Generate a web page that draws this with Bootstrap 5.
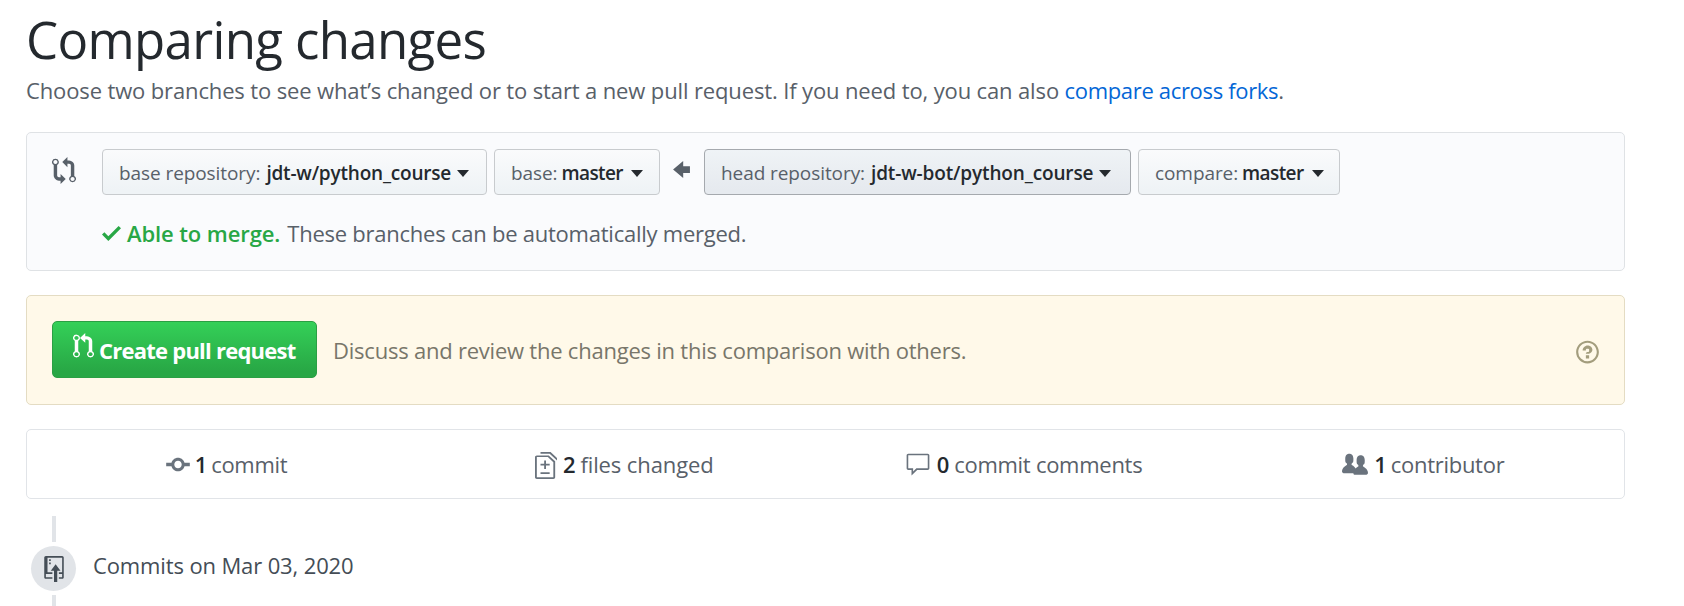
<!DOCTYPE html>
<html lang="en">
<head>
<meta charset="utf-8">
<meta name="viewport" content="width=device-width, initial-scale=1">
<title>Comparing changes</title>
<link href="https://cdn.jsdelivr.net/npm/bootstrap@5.3.0/dist/css/bootstrap.min.css" rel="stylesheet">
<style>
  body { font: 400 22px/34px "Open Sans", "Noto Sans", sans-serif; color: #586069; background: #fff; overflow: hidden; white-space: nowrap; letter-spacing: -.27px; }
  svg { fill: currentColor; display: block; flex: none; }
  b { font-weight: 600; }
  .page { width: 1599px; margin-left: 26px; padding-top: 4px; }
  .page-title { font-size: 51px; line-height: 70px; font-weight: 400; color: #24292e; letter-spacing: -.66px; }
  .intro { margin-top: -1px; letter-spacing: -.133px; }
  .intro a { color: #0366d6; letter-spacing: -.33px; }
  .compare-box { margin-top: 25px; height: 139px; padding: 16px 0 0 25px; background: #fafbfd; border: 1px solid #dfe2e5; border-radius: 5px; }
  .compare-box > svg { color: #586069; margin: 8px 26px 0 0; }
  .btn-branch { height: 46px; padding: 1px 17px 0 16px; font-size: 19px; line-height: 42px; color: #24292e; border: 1px solid #c8cbce; border-radius: 4px; background: linear-gradient(#fafbfc, #eff3f6 90%); display: flex; align-items: center; letter-spacing: -.08px; }
  .btn-branch span { color: #586069; margin-right: 6px; }
  .btn-branch b { letter-spacing: -.2px; }
  .btn-branch::after { content: ""; border: 6.5px solid transparent; border-top: 7px solid #24292e; border-bottom: 0; margin: 1px 0 0 6px; }
  .btn-branch.active { color: #24292e; border-color: #a5a9ae; background: linear-gradient(#eff3f6, #e6eaef 90%); }
  .btn-branch.active b { letter-spacing: -.14px; }
  .master span { margin-right: 4px; }
  .master b { letter-spacing: -.6px; margin-right: 2px; }
  .merge-status { margin-top: 21px; }
  .merge-status b { color: #28a745; margin: 0 7px 0 6px; letter-spacing: -.1px; }
  .merge-status svg { color: #28a745; }
  .merge-status span { letter-spacing: -.24px; }
  .create-box { margin-top: 24px; height: 110px; padding: 0 25px; background: #fff9e9; border: 1px solid #e4dcc3; border-radius: 5px; color: #78766a; }
  .btn-create { width: 265px; height: 57px; margin-bottom: 1px; padding: 0 20px; font: inherit; font-weight: 700; color: #fff; border: 1px solid #2b9f44; border-radius: 5px; background: linear-gradient(#34d058, #28a745 90%); display: flex; align-items: center; letter-spacing: -.76px; }
  .btn-create:hover { color: #fff; }
  .create-box span { letter-spacing: -.225px; }
  .stats { margin-top: 24px; height: 70px; border: 1px solid #e1e4e8; border-radius: 5px; color: #586069; }
  .stats b { color: #24292e; margin-right: 5px; }
  .stats svg { color: #6a737d; }
  .timeline { margin-top: 17px; }
  .rail { width: 56px; }
  .rail i { width: 4px; background: #e1e4e8; }
  .disc { width: 45px; height: 45px; margin: 4px 1px 4px 0; background: #e1e4e8; color: #444d56; }
  .date { color: #444d56; letter-spacing: -.13px; }
</style>
</head>
<body>
<main class="page">
  <h1 class="page-title mb-0">Comparing changes</h1>
  <p class="intro mb-0">Choose two branches to see what’s changed or to start a new pull request. If you need to, you can also <a class="text-decoration-none" href="#">compare across forks</a>.</p>

  <section class="compare-box d-flex align-items-start">
    <svg width="24" height="27" viewBox="0 0 14 16" preserveAspectRatio="none"><path fill-rule="evenodd" d="M5 12H4c-.27-.02-.48-.11-.69-.31-.21-.2-.3-.42-.31-.69V4.72A1.993 1.993 0 0 0 2 1a1.993 1.993 0 0 0-1 3.72V11c.03.78.34 1.47.94 2.06.6.59 1.28.91 2.06.94h1v2l3-3-3-3v2zM2 1.8c.66 0 1.2.55 1.2 1.2 0 .65-.55 1.2-1.2 1.2C1.35 4.2.8 3.65.8 3c0-.65.55-1.2 1.2-1.2zm11 9.48V5c-.03-.78-.34-1.47-.94-2.06-.6-.59-1.28-.91-2.06-.94H9V0L6 3l3 3V4h1c.27.02.48.11.69.31.21.2.3.42.31.69v6.28A1.993 1.993 0 0 0 12 15a1.993 1.993 0 0 0 1-3.72zm-1 2.92c-.66 0-1.2-.55-1.2-1.2 0-.65.55-1.2 1.2-1.2.65 0 1.2.55 1.2 1.2 0 .65-.55 1.2-1.2 1.2z"/></svg>
    <div>
      <div class="d-flex align-items-center">
        <button class="btn btn-branch" style="width:385px"><span>base repository:</span><b>jdt-w/python_course</b></button>
        <button class="btn btn-branch master" style="width:166px;margin-left:7px"><span>base:</span><b>master</b></button>
        <svg width="17" height="27" style="margin:0 14px 5px 13px" viewBox="0 0 10 16"><path d="M6 3L0 8l6 5v-3h4V6H6V3z"/></svg>
        <button class="btn btn-branch active" style="width:427px"><span>head repository:</span><b>jdt-w-bot/python_course</b></button>
        <button class="btn btn-branch master" style="width:202px;margin-left:7px"><span>compare:</span><b>master</b></button>
      </div>
      <div class="merge-status d-flex align-items-center">
        <svg width="19" height="26" viewBox="0 0 12 16"><path d="M12 5l-8 8-4-4 1.5-1.5L4 10l6.5-6.5L12 5z"/></svg>
        <b>Able to merge.</b><span>These branches can be automatically merged.</span>
      </div>
    </div>
  </section>

  <section class="create-box d-flex align-items-center">
    <button class="btn btn-create"><svg class="mb-2" style="margin-right:5px" width="21" height="26" viewBox="0 0 12 16" preserveAspectRatio="none"><path fill-rule="evenodd" d="M11 11.28V5c-.03-.78-.34-1.47-.94-2.06C9.46 2.35 8.78 2.03 8 2H7V0L4 3l3 3V4h1c.27.02.48.11.69.31.21.2.3.42.31.69v6.28A1.993 1.993 0 0 0 10 15a1.993 1.993 0 0 0 1-3.72zm-1 2.92c-.66 0-1.2-.55-1.2-1.2 0-.65.55-1.2 1.2-1.2.65 0 1.2.55 1.2 1.2 0 .65-.55 1.2-1.2 1.2zM4 3c0-1.11-.89-2-2-2a1.993 1.993 0 0 0-1 3.72v6.56A1.993 1.993 0 0 0 2 15a1.993 1.993 0 0 0 1-3.72V4.72c.59-.34 1-.98 1-1.72zm-.8 10c0 .66-.55 1.2-1.2 1.2-.65 0-1.2-.55-1.2-1.2 0-.65.55-1.2 1.2-1.2.65 0 1.2.55 1.2 1.2zM2 4.2C1.34 4.2.8 3.65.8 3c0-.65.55-1.2 1.2-1.2.65 0 1.2.55 1.2 1.2 0 .65-.55 1.2-1.2 1.2z"/></svg>Create pull request</button>
    <span class="ms-3">Discuss and review the changes in this comparison with others.</span>
    <svg class="ms-auto mt-1" style="color:#a39d7d" width="23" height="26" viewBox="0 0 14 16"><path fill-rule="evenodd" d="M6 10h2v2H6v-2zm4-3.5C10 8.64 8 9 8 9H6c0-.55.45-1 1-1h.5c.28 0 .5-.22.5-.5v-1c0-.28-.22-.5-.5-.5h-1c-.28 0-.5.22-.5.5V7H4c0-1.5 1.5-3 3-3s3 1 3 2.5zM7 2.3c3.14 0 5.7 2.56 5.7 5.7s-2.56 5.7-5.7 5.7A5.71 5.71 0 0 1 1.3 8c0-3.14 2.56-5.7 5.7-5.7zM7 1C3.14 1 0 4.14 0 8s3.14 7 7 7 7-3.14 7-7-3.14-7-7-7z"/></svg>
  </section>

  <section class="stats row g-0 align-items-center">
    <div class="col-3 d-flex justify-content-center align-items-center"><svg width="24" height="27" style="margin-right:5px" viewBox="0 0 14 16"><path fill-rule="evenodd" d="M10.86 7c-.45-1.72-2-3-3.86-3-1.86 0-3.41 1.28-3.86 3H0v2h3.14c.45 1.72 2 3 3.86 3 1.86 0 3.41-1.28 3.86-3H14V7h-3.14zM7 10.2c-1.22 0-2.2-.98-2.2-2.2 0-1.22.98-2.2 2.2-2.2 1.22 0 2.2.98 2.2 2.2 0 1.22-.98 2.2-2.2 2.2z"/></svg><b style="margin-right:4px">1</b>commit</div>
    <div class="col-3 d-flex justify-content-center align-items-center"><svg width="22" height="27" style="margin:2px 6px 0 -3px" viewBox="0 0 12 16" preserveAspectRatio="none"><path fill-rule="evenodd" d="M6 7h2v1H6v2H5V8H3V7h2V5h1v2zm-3 6h5v-1H3v1zM7.5 2L11 5.5V15c0 .55-.45 1-1 1H1c-.55 0-1-.45-1-1V3c0-.55.45-1 1-1h6.5zM10 6L7 3H1v12h9V6zM8.5 0H3v1h5l4 4v8h1V4.5L8.5 0z"/></svg><b>2</b><span style="letter-spacing:-.1px">files changed</span></div>
    <div class="col-3 d-flex justify-content-center align-items-center"><svg width="26" height="26" style="margin:2px 6px 0 -3px" viewBox="0 0 16 16"><path fill-rule="evenodd" d="M14 1H2c-.55 0-1 .45-1 1v8c0 .55.45 1 1 1h2v3.5L7.5 11H14c.55 0 1-.45 1-1V2c0-.55-.45-1-1-1zm0 9H7l-2 2v-2H2V2h12v8z"/></svg><b>0</b><span>commit comments</span></div>
    <div class="col-3 d-flex justify-content-center align-items-center"><svg width="26" height="26" style="margin:2px 6px 0 -2px" viewBox="0 0 16 16"><path fill-rule="evenodd" d="M16 12.999c0 .439-.45 1-1 1H7.995c-.539 0-.994-.447-.995-.999H1c-.54 0-1-.561-1-1 0-2.634 3-4 3-4s.229-.409 0-1c-.841-.621-1.058-.59-1-3 .058-2.419 1.367-3 2.5-3s2.442.58 2.5 3c.058 2.41-.159 2.379-1 3-.229.59 0 1 0 1s1.549.711 2.42 2.088C9.196 9.369 10 8.999 10 8.999s.229-.409 0-1c-.841-.62-1.058-.59-1-3 .058-2.419 1.367-3 2.5-3s2.437.581 2.495 3c.059 2.41-.158 2.38-1 3-.229.59 0 1 0 1s3.005 1.366 3.005 4"/></svg><b style="margin-right:4px">1</b>contributor</div>
  </section>

  <section class="timeline d-flex">
    <div class="rail d-flex flex-column align-items-center">
      <i style="height:26px"></i>
      <div class="disc rounded-circle d-flex align-items-center justify-content-center"><svg width="20" height="26" viewBox="0 0 12 16"><path fill-rule="evenodd" d="M4 3H3V2h1v1zM3 5h1V4H3v1zm4 0L4 9h2v7h2V9h2L7 5zm4-5H1C.45 0 0 .45 0 1v12c0 .55.45 1 1 1h4v-1H1v-2h4v-1H2V1h9.02L11 10H9v1h2v2H9v1h2c.55 0 1-.45 1-1V1c0-.55-.45-1-1-1z"/></svg></div>
      <i style="height:12px"></i>
    </div>
    <div class="date" style="margin:32px 0 0 11px">Commits on Mar 03, 2020</div>
  </section>
</main>
<script src="https://cdn.jsdelivr.net/npm/bootstrap@5.3.0/dist/js/bootstrap.bundle.min.js"></script>
</body>
</html>
